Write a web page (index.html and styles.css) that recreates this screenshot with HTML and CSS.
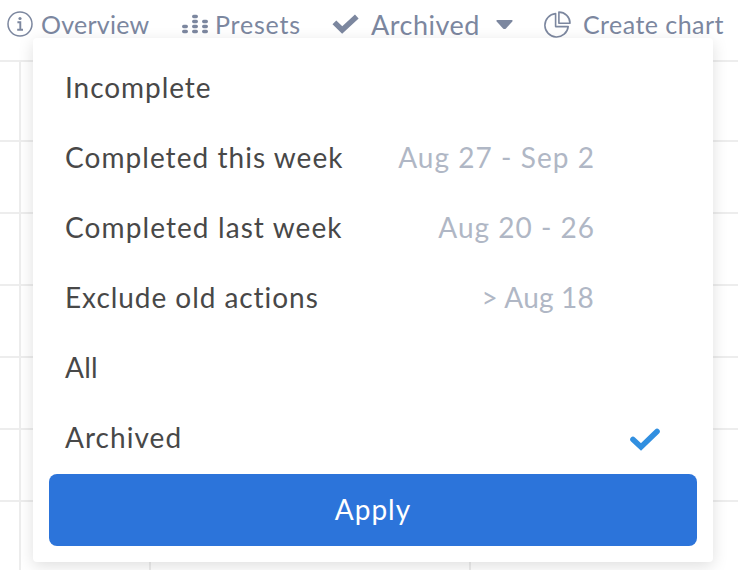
FILE: index.html
```html
<!DOCTYPE html>
<html lang="en">
<head>
<meta charset="utf-8">
<title>Actions</title>
<link rel="stylesheet" href="styles.css">
</head>
<body>
<div class="page">
  <header class="toolbar">
    <a class="tool overview">
      <svg class="icon" width="26" height="26" viewBox="0 0 26 26"><circle cx="13" cy="13" r="12" fill="none" stroke="currentColor" stroke-width="1.5"/><circle cx="13" cy="7.5" r="1.6" fill="currentColor"/><path d="M10.4 11.2H13.3V18.5M10.2 18.7H16" fill="none" stroke="currentColor" stroke-width="1.9"/></svg>
      <span class="label">Overview</span>
    </a>
    <a class="tool presets">
      <svg class="icon" width="26" height="20" viewBox="0 0 26 20"><g fill="currentColor"><rect x="0" y="9.8" width="6" height="3.4" rx="1.7"/><rect x="0" y="14.8" width="6" height="3.4" rx="1.7"/><rect x="10" y="-0.2" width="6" height="3.4" rx="1.7"/><rect x="10" y="4.8" width="6" height="3.4" rx="1.7"/><rect x="10" y="9.8" width="6" height="3.4" rx="1.7"/><rect x="10" y="14.8" width="6" height="3.4" rx="1.7"/><rect x="20" y="4.8" width="6" height="3.4" rx="1.7"/><rect x="20" y="9.8" width="6" height="3.4" rx="1.7"/><rect x="20" y="14.8" width="6" height="3.4" rx="1.7"/></g></svg>
      <span class="label">Presets</span>
    </a>
    <a class="tool filter">
      <svg class="icon" width="28" height="20" viewBox="0 0 28 20"><path d="M2.4 8.3L10.2 16L24.8 2.5" fill="none" stroke="currentColor" stroke-width="5.4"/></svg>
      <span class="label">Archived</span>
      <svg class="icon caret" width="17" height="10" viewBox="0 0 17 10"><path d="M1 0H16Q17 0.5 16.3 1.4L10 8.4Q8.5 9.6 7 8.4L0.7 1.4Q0 0.5 1 0Z" fill="currentColor"/></svg>
    </a>
    <a class="tool create">
      <svg class="icon" width="27" height="27" viewBox="0 0 27 27"><path d="M11.6 2.6A11.7 11.7 0 1 0 24.2 15.6H11.6ZM14.9 1.1V12.2H26A11.1 11.1 0 0 0 14.9 1.1Z" fill="none" stroke="currentColor" stroke-width="1.6" stroke-linejoin="round"/></svg>
      <span class="label">Create chart</span>
    </a>
  </header>
  <main class="board">
    <div class="row first"><i></i><i></i><i></i></div>
    <div class="row"><i></i><i></i><i></i></div>
    <div class="row"><i></i><i></i><i></i></div>
    <div class="row"><i></i><i></i><i></i></div>
    <div class="row"><i></i><i></i><i></i></div>
    <div class="row"><i></i><i></i><i></i></div>
    <div class="row"><i></i><i></i><i></i></div>
  </main>
  <section class="menu">
    <ul class="options">
      <li class="option"><span class="name incomplete">Incomplete</span></li>
      <li class="option"><span class="name this-week">Completed this week</span><span class="range range-this">Aug 27 - Sep 2</span></li>
      <li class="option"><span class="name last-week">Completed last week</span><span class="range range-last">Aug 20 - 26</span></li>
      <li class="option"><span class="name exclude">Exclude old actions</span><span class="range range-old">&gt; Aug 18</span></li>
      <li class="option"><span class="name all">All</span></li>
      <li class="option"><span class="name archived">Archived</span>
        <svg class="check" width="32" height="24" viewBox="0 0 32 24"><path d="M4 11.5L12 19L28 3.5" fill="none" stroke="currentColor" stroke-width="5.6" stroke-linejoin="miter" stroke-linecap="round"/></svg>
      </li>
    </ul>
    <button class="apply"><span>Apply</span></button>
  </section>
</div>
</body>
</html>
```

FILE: styles.css
```css
* { box-sizing: border-box; }
body { margin: 0; background: #fff; font-family: Lato, "Open Sans", sans-serif; }
.page { position: relative; width: 738px; height: 570px; overflow: hidden; }
.toolbar { display: flex; height: 60px; padding-left: 7px; color: #7c879f; }
.tool { display: flex; align-items: flex-start; white-space: nowrap; }
.icon { flex: none; }
.label { line-height: 30px; font-size: 25px; margin-top: 9px; }
.overview { width: 175px; }
.overview .icon { margin-top: 11px; }
.overview .label { margin-left: 8px; letter-spacing: 0.25px; }
.presets { width: 150px; }
.presets .icon { margin-top: 15px; overflow: visible; }
.presets .label { margin-left: 7px; letter-spacing: 0.8px; }
.filter { width: 212px; }
.filter .icon { margin-top: 14px; }
.filter .label { width: 112px; margin: 10px 0 0 11px; font-size: 27px; letter-spacing: 0.5px; }
.filter .caret { margin: 20px 0 0 13px; }
.create .icon { margin-top: 11px; }
.create .label { margin-left: 12px; letter-spacing: 0.45px; }
.board { display: flex; flex-direction: column; }
.row { display: grid; grid-template-columns: 21px 130px 320px 1fr; flex: none; height: 72px; border-top: 2px solid #ededed; }
.row.first { height: 80px; }
.row i { border-right: 2px solid #ededed; }
.menu { position: absolute; left: 33px; top: 38px; width: 680px; height: 524px; padding: 16px; background: #fff; border-radius: 4px; box-shadow: 0 4px 16px rgba(0, 0, 0, 0.13); }
.options { margin: 0; padding: 0; list-style: none; }
.option { display: flex; align-items: center; height: 70px; padding: 0 103px 0 16px; font-size: 28px; line-height: 34px; color: #484848; white-space: nowrap; }
.name, .range { padding-bottom: 4px; }
.incomplete { letter-spacing: 0.95px; }
.this-week { letter-spacing: 1.05px; }
.last-week { letter-spacing: 1.1px; }
.exclude { letter-spacing: 0.95px; }
.all { letter-spacing: 0.3px; }
.archived { letter-spacing: 1.05px; }
.range { margin-left: auto; color: #b0b7c5; }
.range-this { margin-right: -1px; letter-spacing: 1.05px; }
.range-last { margin-right: -1px; letter-spacing: 1px; }
.range-old { letter-spacing: 0.2px; }
.check { margin: 1px -67px 0 auto; color: #318fe0; }
.apply { display: block; width: 648px; height: 72px; padding: 0 0 2px; border: 0; border-radius: 8px; background: #2c74da; color: #fff; font: 28px/70px Lato, "Open Sans", sans-serif; letter-spacing: 1px; }
```
